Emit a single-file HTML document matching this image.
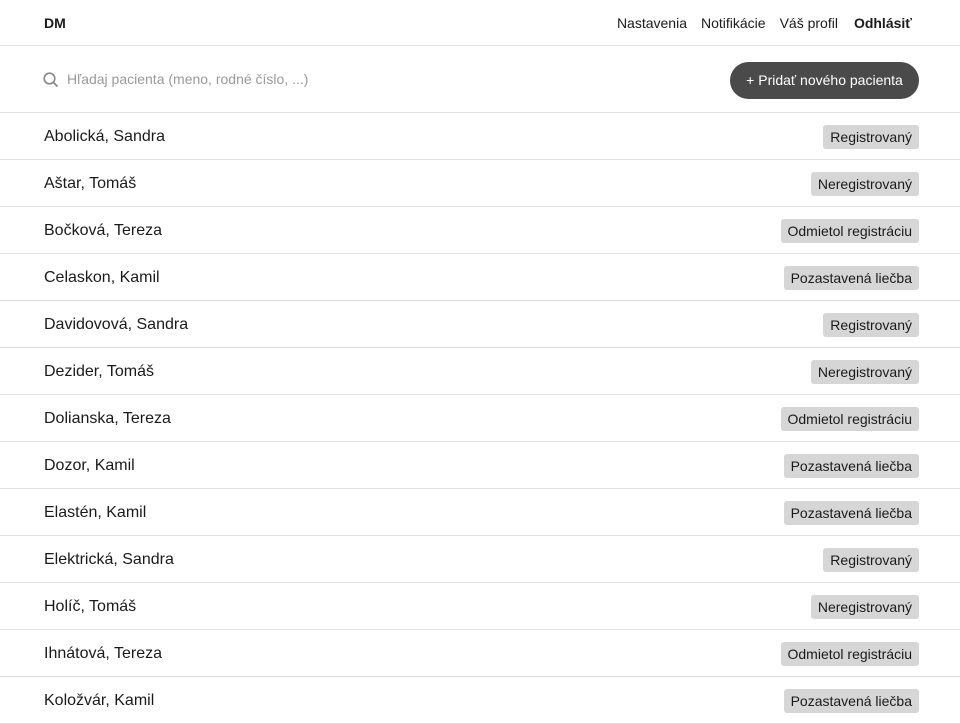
<!DOCTYPE html>
<html><head><meta charset="utf-8"><style>
*{margin:0;padding:0;box-sizing:border-box}
body{width:960px;height:720px;overflow:hidden;background:#fff;font-family:"Liberation Sans",sans-serif;color:#1a1a1a}
.hdr{height:46px;border-bottom:1px solid #e2e2e2;position:relative}
.dm{position:absolute;left:44px;top:15px;font-weight:bold;font-size:14px}
.nav{position:absolute;right:48px;top:15px;font-size:14px}
.nav span{margin-left:14px}
.srch{height:67px;border-bottom:1px solid #e2e2e2;position:relative}
.srch .ph{position:absolute;left:67px;top:25px;font-size:14px;color:#9a9a9a}
.srch svg{position:absolute}
.btn{position:absolute;left:730px;top:16px;width:189px;height:37px;border-radius:19px;background:#4a4a4a;color:#fff;font-size:14px;text-align:center;line-height:37px}
.row{height:47px;border-bottom:1px solid #e2e2e2;position:relative}
.row .n{position:absolute;left:44px;top:15px;font-size:16px}
.row .b{position:absolute;right:41px;top:12px;height:24px;line-height:24px;padding:0 7px;background:#d6d6d6;border-radius:3px;font-size:14px}
</style></head><body>
<div class="hdr"><div class="dm">DM</div><div class="nav"><span>Nastavenia</span><span>Notifikácie</span><span>Váš profil</span><span style="font-weight:bold;margin-left:16px">Odhlásiť</span></div></div>
<div class="srch"><svg style="left:43px;top:26px" width="16" height="16" viewBox="0 0 16 16"><circle cx="6.5" cy="6.5" r="5.3" fill="none" stroke="#888" stroke-width="1.6"/><line x1="10.3" y1="10.3" x2="14.5" y2="14.5" stroke="#888" stroke-width="1.8"/></svg><div class="ph">Hľadaj pacienta (meno, rodné číslo, ...)</div><div class="btn">+ Pridať nového pacienta</div></div>
<div class="row"><div class="n">Abolická, Sandra</div><div class="b">Registrovaný</div></div>
<div class="row"><div class="n">Aštar, Tomáš</div><div class="b">Neregistrovaný</div></div>
<div class="row"><div class="n">Bočková, Tereza</div><div class="b">Odmietol registráciu</div></div>
<div class="row"><div class="n">Celaskon, Kamil</div><div class="b">Pozastavená liečba</div></div>
<div class="row"><div class="n">Davidovová, Sandra</div><div class="b">Registrovaný</div></div>
<div class="row"><div class="n">Dezider, Tomáš</div><div class="b">Neregistrovaný</div></div>
<div class="row"><div class="n">Dolianska, Tereza</div><div class="b">Odmietol registráciu</div></div>
<div class="row"><div class="n">Dozor, Kamil</div><div class="b">Pozastavená liečba</div></div>
<div class="row"><div class="n">Elastén, Kamil</div><div class="b">Pozastavená liečba</div></div>
<div class="row"><div class="n">Elektrická, Sandra</div><div class="b">Registrovaný</div></div>
<div class="row"><div class="n">Holíč, Tomáš</div><div class="b">Neregistrovaný</div></div>
<div class="row"><div class="n">Ihnátová, Tereza</div><div class="b">Odmietol registráciu</div></div>
<div class="row"><div class="n">Koložvár, Kamil</div><div class="b">Pozastavená liečba</div></div>
</body></html>
